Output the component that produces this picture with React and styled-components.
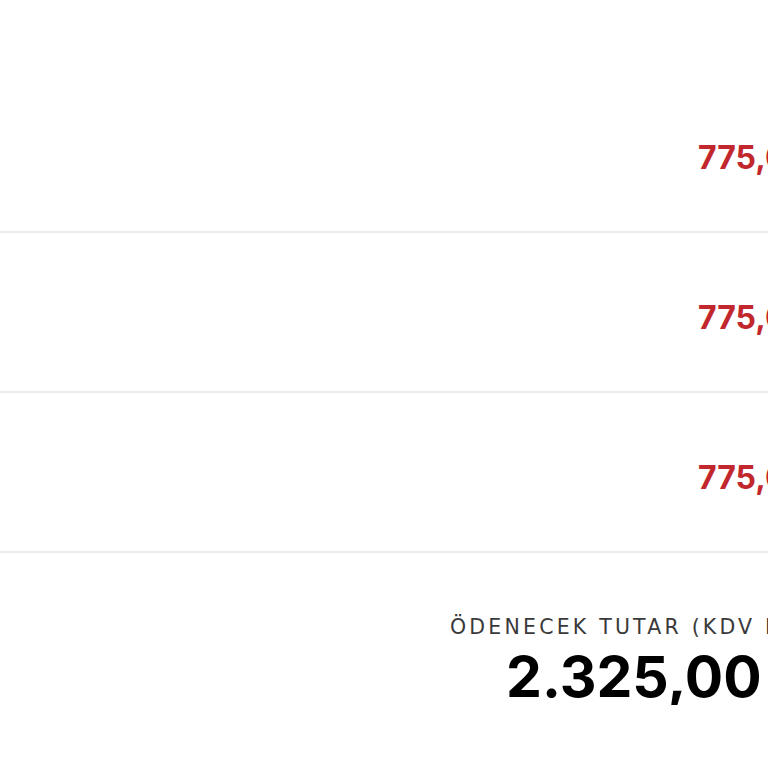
import styled, { createGlobalStyle } from "styled-components";

const GlobalStyle = createGlobalStyle`
  html, body {
    margin: 0;
    padding: 0;
    background: #ffffff;
    overflow: hidden;
  }
  body {
    font-family: Inter, "Noto Sans", sans-serif;
  }
`;

const Page = styled.div`
  width: 900px;
  padding-top: 73px;
`;

const ItemRow = styled.div`
  display: grid;
  grid-template-columns: 698px 1fr;
  align-items: center;
  height: 158px;
  border-bottom: 2px solid #ebebeb;
`;

const Price = styled.span`
  font-size: 32px;
  font-weight: 700;
  color: #c1272d;
  white-space: nowrap;
  padding-top: 10px;
`;

const Summary = styled.div`
  display: flex;
  flex-direction: column;
  align-items: flex-start;
  padding: 62px 0 0 450px;
`;

const SummaryLabel = styled.span`
  font-family: "DejaVu Sans", Inter, sans-serif;
  font-size: 20.5px;
  font-weight: 400;
  letter-spacing: 3.2px;
  color: #3a3a3a;
  white-space: nowrap;
  line-height: 1.2;
`;

const SummaryAmount = styled.span`
  margin: 8px 0 0 56px;
  font-size: 57px;
  font-weight: 700;
  color: #000000;
  white-space: nowrap;
  line-height: 1;
`;

const items = [
  { id: 1, price: "775,00 TL" },
  { id: 2, price: "775,00 TL" },
  { id: 3, price: "775,00 TL" },
];

export default function App() {
  return (
    <>
      <GlobalStyle />
      <Page>
        {items.map((item) => (
          <ItemRow key={item.id}>
            <div />
            <Price>{item.price}</Price>
          </ItemRow>
        ))}
        <Summary>
          <SummaryLabel>ÖDENECEK TUTAR (KDV DAHİL)</SummaryLabel>
          <SummaryAmount>2.325,00 TL</SummaryAmount>
        </Summary>
      </Page>
    </>
  );
}
